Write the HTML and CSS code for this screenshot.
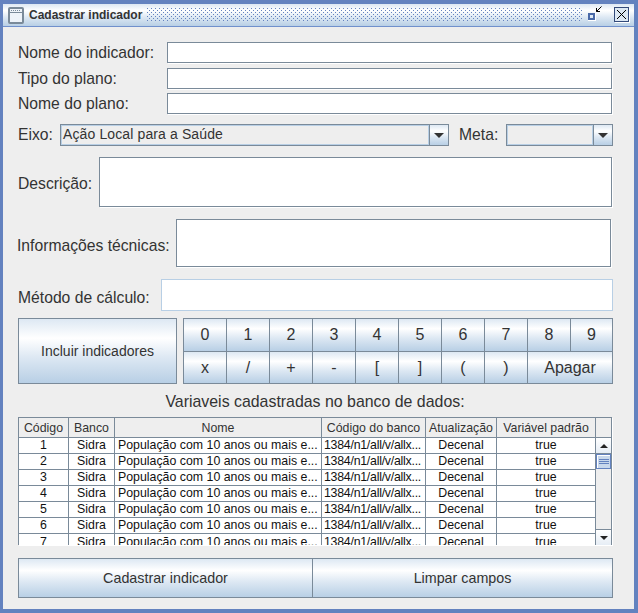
FILE: index.html
```html
<!DOCTYPE html>
<html lang="pt">
<head>
<meta charset="utf-8">
<title>Cadastrar indicador</title>
<link rel="stylesheet" href="styles.css">
</head>
<body>
<div class="window">
  <header class="titlebar">
    <svg class="win-icon" width="16" height="17" viewBox="0 0 16 17"><rect x="1" y="1" width="14" height="15" rx="1" fill="#eef3f9" stroke="#7a8a99" stroke-width="2"/><path d="M2 5.5h12" stroke="#7a8a99"/><path d="M3 3.5h10" stroke="#7a8a99" stroke-dasharray="1 1"/></svg>
    <span class="title-text">Cadastrar indicador</span>
    <svg class="bumps" width="435" height="14"><defs><pattern id="dots" width="4" height="4" patternUnits="userSpaceOnUse"><rect width="1" height="1" fill="#6382bf"/><rect x="2" y="2" width="1" height="1" fill="#6382bf"/></pattern></defs><rect width="435" height="14" fill="url(#dots)"/></svg>
    <svg class="btn-max" width="15" height="15" viewBox="0 0 15 15"><rect x="0" y="7" width="8" height="8" fill="#fff"/><rect x="1" y="8" width="5" height="5" fill="#dde8f3" stroke="#4a6aa8" stroke-width="2"/><path d="M8.5 2v3.5H12M8.5 5.5L13.5 0.5" stroke="#000" stroke-width="1" fill="none"/></svg>
    <svg class="btn-close" width="16" height="16" viewBox="0 0 16 16"><rect x="0.5" y="0.5" width="14" height="14" fill="#dde8f3" stroke="#334a7a"/><rect x="15" y="1" width="1" height="15" fill="#fff"/><rect x="1" y="15" width="15" height="1" fill="#fff"/><path d="M3 3l9 9M12 3l-9 9" stroke="#000" fill="none"/></svg>
  </header>
  <main class="form">
    <div class="row row-1"><label class="lbl lbl-indicador">Nome do indicador:</label><div class="field"></div></div>
    <div class="row row-2"><label class="lbl lbl-indicador">Tipo do plano:</label><div class="field"></div></div>
    <div class="row row-3"><label class="lbl lbl-indicador">Nome do plano:</label><div class="field"></div></div>
    <div class="row row-combo">
      <label class="lbl lbl-eixo">Eixo:</label>
      <div class="combo combo-eixo"><span class="combo-value">Ação Local para a Saúde</span><span class="combo-arrow"><svg width="10" height="5" viewBox="0 0 10 5"><path d="M0 0h10L5 5z" fill="#333"/></svg></span></div>
      <label class="lbl lbl-meta">Meta:</label>
      <div class="combo combo-meta"><span class="combo-value"></span><span class="combo-arrow"><svg width="10" height="5" viewBox="0 0 10 5"><path d="M0 0h10L5 5z" fill="#333"/></svg></span></div>
    </div>
    <div class="row row-desc"><label class="lbl lbl-desc">Descrição:</label><div class="field"></div></div>
    <div class="row row-info"><label class="lbl lbl-info">Informações técnicas:</label><div class="field"></div></div>
    <div class="row row-metodo"><label class="lbl lbl-metodo">Método de cálculo:</label><div class="field field-light"></div></div>
    <div class="row row-keys">
      <button class="btn btn-incluir">Incluir indicadores</button>
      <div class="keypad">
        <button class="btn key">0</button><button class="btn key">1</button><button class="btn key">2</button><button class="btn key">3</button><button class="btn key">4</button><button class="btn key">5</button><button class="btn key">6</button><button class="btn key">7</button><button class="btn key">8</button><button class="btn key">9</button>
        <button class="btn key">x</button><button class="btn key">/</button><button class="btn key">+</button><button class="btn key">-</button><button class="btn key">[</button><button class="btn key">]</button><button class="btn key">(</button><button class="btn key">)</button><button class="btn key key-apagar">Apagar</button>
      </div>
    </div>
    <div class="table-caption">Variaveis cadastradas no banco de dados:</div>
    <div class="tablebox">
      <div class="table-clip">
        <table class="grid">
          <colgroup><col class="c1"><col class="c2"><col class="c3"><col class="c4"><col class="c5"><col class="c6"></colgroup>
          <thead><tr><th>Código</th><th>Banco</th><th>Nome</th><th>Código do banco</th><th>Atualização</th><th>Variável padrão</th></tr></thead>
          <tbody>
            <tr><td>1</td><td>Sidra</td><td class="left">População com 10 anos ou mais e...</td><td class="left code">1384/n1/all/v/allx...</td><td>Decenal</td><td>true</td></tr>
            <tr><td>2</td><td>Sidra</td><td class="left">População com 10 anos ou mais e...</td><td class="left code">1384/n1/all/v/allx...</td><td>Decenal</td><td>true</td></tr>
            <tr><td>3</td><td>Sidra</td><td class="left">População com 10 anos ou mais e...</td><td class="left code">1384/n1/all/v/allx...</td><td>Decenal</td><td>true</td></tr>
            <tr><td>4</td><td>Sidra</td><td class="left">População com 10 anos ou mais e...</td><td class="left code">1384/n1/all/v/allx...</td><td>Decenal</td><td>true</td></tr>
            <tr><td>5</td><td>Sidra</td><td class="left">População com 10 anos ou mais e...</td><td class="left code">1384/n1/all/v/allx...</td><td>Decenal</td><td>true</td></tr>
            <tr><td>6</td><td>Sidra</td><td class="left">População com 10 anos ou mais e...</td><td class="left code">1384/n1/all/v/allx...</td><td>Decenal</td><td>true</td></tr>
            <tr><td>7</td><td>Sidra</td><td class="left">População com 10 anos ou mais e...</td><td class="left code">1384/n1/all/v/allx...</td><td>Decenal</td><td>true</td></tr>
          </tbody>
        </table>
      </div>
      <div class="scrollbar">
        <div class="sb-corner"></div>
        <div class="sb-btn"><svg width="8" height="4" viewBox="0 0 8 4"><path d="M4 0l4 4H0z" fill="#222"/></svg></div>
        <div class="sb-thumb"><i></i><i></i><i></i></div>
        <div class="sb-track"></div>
        <div class="sb-btn"><svg width="8" height="4" viewBox="0 0 8 4"><path d="M0 0h8L4 4z" fill="#222"/></svg></div>
      </div>
    </div>
    <div class="row row-actions">
      <button class="btn btn-action btn-cadastrar">Cadastrar indicador</button>
      <button class="btn btn-action btn-limpar">Limpar campos</button>
    </div>
  </main>
</div>
</body>
</html>
```
FILE: styles.css
```css
* { box-sizing: border-box; }
html, body { margin: 0; height: 100%; }
body {
  width: 638px;
  height: 613px;
  overflow: hidden;
  background: #6382bf;
  padding: 4px 4px 4px 3px;
  font-family: "Liberation Sans", Arial, sans-serif;
  color: #333;
}
.window {
  height: 605px;
  background: #eee;
  display: flex;
  flex-direction: column;
}
.titlebar {
  height: 23px;
  flex: none;
  display: flex;
  align-items: center;
  padding-left: 5px;
  border-bottom: 1px solid #7090cc;
  background: linear-gradient(#dde8f3 0, #fff 30%, #dde8f3 60%, #b8cfe5 100%);
}
.win-icon { flex: none; }
.title-text {
  margin-left: 5px;
  font-size: 12px;
  font-weight: bold;
  color: #333;
  white-space: nowrap;
}
.bumps { flex: none; margin-left: 5px; }
.btn-max { flex: none; margin: -3px 0 0 6px; }
.btn-close { flex: none; margin: 0 0 0 11px; }

.form { flex: 1; padding: 15px 21px 0 15px; display: flex; flex-direction: column; }
.row { display: flex; align-items: center; flex: none; }
.lbl { flex: none; font-size: 15.7px; color: #333; white-space: nowrap; }
.field {
  flex: 1;
  align-self: stretch;
  background: #fff;
  border: 1px solid #7a8a99;
  box-shadow: 1px 1px 0 #fff;
}
.field-light { border-color: #b8cfe5; box-shadow: none; }
.row-1 { height: 21px; margin-top: 0; }
.row-2 { height: 21px; margin-top: 5px; }
.row-3 { height: 21px; margin-top: 4px; }
.row-1 .field, .row-2 .field, .row-3 .field { margin-right: 1px; }
.lbl-indicador { width: 149px; }
.row-combo { height: 22px; margin-top: 10px; }
.lbl-eixo { width: 42px; }
.combo {
  flex: none;
  height: 22px;
  display: flex;
  border: 1px solid #7a8a99;
  background: #eee;
}
.combo-eixo { width: 389px; }
.combo-meta { width: 107px; }
.combo-value {
  flex: 1;
  border: 1px solid #b8cfe5;
  font-size: 14px;
  line-height: 16px;
  letter-spacing: 0.12px;
  padding-left: 1px;
  color: #333;
  white-space: nowrap;
}
.combo-arrow {
  flex: none;
  width: 19px;
  display: flex;
  align-items: center;
  justify-content: center;
  border-left: 1px solid #7a8a99;
  background: linear-gradient(#dde8f3 0, #fff 30%, #dde8f3 60%, #b8cfe5 100%);
}
.lbl-meta { width: 47px; margin-left: 10px; }
.row-desc { height: 50px; margin-top: 11px; }
.lbl-desc { width: 81px; margin-top: 4px; }
.row-desc .field { margin-right: 1px; }
.row-info { height: 48px; margin-top: 12px; margin-left: -1px; }
.lbl-info { width: 159px; margin-top: 6px; }
.row-info .field { margin-right: 2px; }
.row-metodo { height: 32px; margin-top: 12px; }
.lbl-metodo { width: 143px; margin-top: 6px; }
.row-keys { height: 66px; margin-top: 7px; gap: 6px; align-items: stretch; }

.btn {
  font-family: inherit;
  color: #333;
  border: 1px solid #7a8a99;
  padding: 0;
  margin: 0;
  background: linear-gradient(#dde8f3 0, #fff 30%, #dde8f3 60%, #b8cfe5 100%);
}
.btn-incluir { width: 159px; font-size: 14px; flex: none; }
.keypad {
  flex: 1;
  display: grid;
  grid-template-columns: repeat(10, 43px);
  grid-template-rows: 33px 33px;
}
.key { font-size: 16px; margin-right: -1px; }
.key:nth-child(-n+10) { margin-bottom: -1px; }
.key:nth-child(10), .key-apagar { margin-right: 0; }
.key-apagar { grid-column: span 2; }

.table-caption {
  flex: none;
  height: 19px;
  margin-top: 8px;
  text-align: center;
  font-size: 15.9px;
  line-height: 19px;
  padding-right: 1px;
}
.tablebox {
  flex: none;
  margin-top: 6px;
  width: 594px;
  height: 128px;
  display: flex;
  border: 1px solid #7a8a99;
  border-bottom: 0;
  background: #eee;
  box-shadow: 1px 1px 0 #fff;
}
.table-clip { flex: none; width: 577px; height: 127px; overflow: hidden; }
.grid {
  table-layout: fixed;
  width: 577px;
  border-collapse: separate;
  border-spacing: 0;
  font-size: 12.35px;
}
.c1 { width: 50px; } .c2 { width: 46px; } .c3 { width: 207px; }
.c4 { width: 104px; } .c5 { width: 71px; } .c6 { width: 99px; }
.grid th, .grid td {
  padding: 0;
  text-align: center;
  white-space: nowrap;
  overflow: hidden;
  border-right: 1px solid #7a8a99;
  border-bottom: 1px solid #7a8a99;
}
.grid th { height: 20px; font-weight: normal; color: #333; }
.grid td { height: 16px; line-height: 15px; background: #fff; color: #111; }
.grid td.left { text-align: left; padding-left: 3px; }
.grid td.code { padding-left: 2px; letter-spacing: -0.25px; }
.grid tr:last-child td { border-bottom: 0; }
.scrollbar { flex: none; width: 15px; display: flex; flex-direction: column; }
.sb-corner { height: 20px; flex: none; border-bottom: 1px solid #7a8a99; }
.sb-btn {
  flex: none;
  height: 16px;
  display: flex;
  align-items: center;
  justify-content: center;
  background: linear-gradient(#fff, #e6edf5);
  border-bottom: 1px solid #7a8a99;
}
.sb-btn:last-child { border-top: 1px solid #7a8a99; border-bottom: 0; }
.sb-thumb {
  flex: none;
  height: 15px;
  display: flex;
  flex-direction: column;
  gap: 1px;
  align-items: center;
  justify-content: center;
  background: #c8d8ec;
  border: 1px solid #6382bf;
  box-shadow: inset 1px 1px 0 #fff;
}
.sb-thumb i { display: block; width: 10px; height: 1px; background: #6382bf; }
.sb-track { flex: 1; background: #eee; }

.row-actions { height: 40px; margin-top: 13px; align-items: stretch; }
.btn-action { flex: none; font-size: 14.3px; }
.btn-cadastrar { width: 295px; }
.btn-limpar { width: 301px; margin-left: -1px; }
```
